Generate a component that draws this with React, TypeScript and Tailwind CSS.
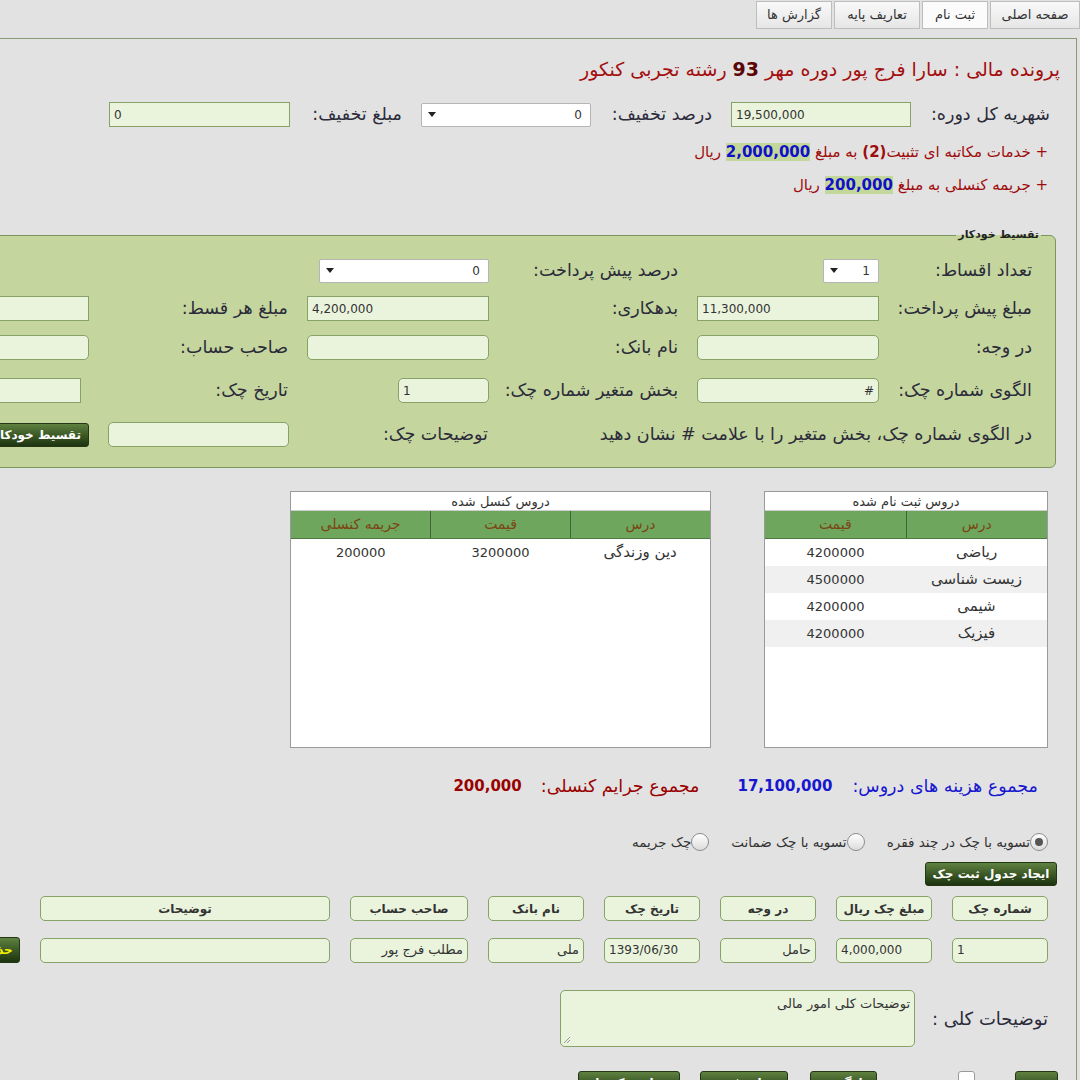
import React from 'react'

const FONT = "font-['DejaVu_Sans','Noto_Sans',sans-serif]"

function Field({ className = '', children }: { className?: string; children?: React.ReactNode }) {
  return (
    <div
      className={`h-[25px] shrink-0 border border-[#86a266] bg-[#eaf4dd] px-[4px] flex items-center text-[12px] text-[#333] whitespace-nowrap overflow-hidden ${className}`}
    >
      {children}
    </div>
  )
}

function Select({ className = '', value }: { className?: string; value: string }) {
  return (
    <div
      className={`h-[24px] shrink-0 border border-[#b5b5b5] bg-white rounded-[2px] flex items-center justify-between pr-[8px] pl-[6px] text-[12px] text-[#333] ${className}`}
    >
      <span>{value}</span>
      <svg width="8" height="5" viewBox="0 0 8 5">
        <path d="M0 0 L8 0 L4 5 Z" fill="#222" />
      </svg>
    </div>
  )
}

function GreenButton({ className = '', children }: { className?: string; children?: React.ReactNode }) {
  return (
    <div
      className={`h-[24px] shrink-0 rounded-[3px] border border-[#233616] bg-gradient-to-b from-[#5f8240] to-[#1d3410] flex items-center justify-center text-[12px] font-bold text-white whitespace-nowrap ${className}`}
    >
      {children}
    </div>
  )
}

function Radio({ checked = false, label }: { checked?: boolean; label: string }) {
  return (
    <div className="flex items-center">
      <div className="w-[18px] h-[18px] rounded-full border border-[#8d8d8d] bg-gradient-to-b from-white to-[#dcdcdc] flex items-center justify-center">
        {checked && <div className="w-[8px] h-[8px] rounded-full bg-[#555]" />}
      </div>
      <span className="text-[13.5px] text-[#333]">{label}</span>
    </div>
  )
}

const regCourses = [
  ['ریاضی', '4200000'],
  ['زیست شناسی', '4500000'],
  ['شیمی', '4200000'],
  ['فیزیک', '4200000'],
]

function CourseTable({
  title,
  cols,
  rows,
  className = '',
}: {
  title: string
  cols: string[]
  rows: string[][]
  className?: string
}) {
  return (
    <div className={`h-[257px] shrink-0 border border-[#9a9a9a] bg-white flex flex-col ${className}`}>
      <div className="h-[19px] text-center text-[13px] leading-[19px] text-[#333] border-b border-[#cfcfcf]">{title}</div>
      <div className="flex h-[28px] bg-[#6ea65e] border-b border-[#4d7a40]">
        {cols.map((c, i) => (
          <div
            key={c}
            className={`flex-1 flex items-center justify-center text-[14px] text-[#7b4513] ${
              i > 0 ? 'border-r border-[#3f6634]' : ''
            }`}
          >
            {c}
          </div>
        ))}
      </div>
      {rows.map((r, ri) => (
        <div key={ri} className={`flex h-[27px] ${ri % 2 === 1 ? 'bg-[#f0f0f0]' : 'bg-white'}`}>
          {r.map((v, i) => (
            <div
              key={i}
              className={`flex-1 flex items-center justify-center text-[#333] ${
                /^\d+$/.test(v) ? 'text-[13px]' : 'text-[15px]'
              }`}
            >
              {v}
            </div>
          ))}
        </div>
      ))}
    </div>
  )
}

const headCells = [
  ['شماره چک', 'w-[96px]'],
  ['مبلغ چک ریال', 'w-[96px]'],
  ['در وجه', 'w-[96px]'],
  ['تاریخ چک', 'w-[96px]'],
  ['نام بانک', 'w-[96px]'],
  ['صاحب حساب', 'w-[118px]'],
  ['توضیحات', 'w-[290px]'],
]

const dataCells: [string, string, boolean][] = [
  ['1', 'w-[96px]', true],
  ['4,000,000', 'w-[96px]', true],
  ['حامل', 'w-[96px]', false],
  ['1393/06/30', 'w-[96px]', true],
  ['ملی', 'w-[96px]', false],
  ['مطلب فرج پور', 'w-[118px]', false],
  ['', 'w-[290px]', false],
]

export default function App() {
  const label = 'text-[17.5px] text-[#2b2b3a] whitespace-nowrap'
  return (
    <div dir="rtl" className={`w-[1080px] h-[1080px] overflow-hidden bg-[#e2e2e2] ${FONT}`}>
      {/* Tabs */}
      <div className="flex gap-[2px] pt-[1px] h-[30px]">
        {[
          ['صفحه اصلی', 'w-[90px]', false],
          ['ثبت نام', 'w-[66px]', true],
          ['تعاریف پایه', 'w-[86px]', false],
          ['گزارش ها', 'w-[76px]', false],
        ].map(([t, w, active]) => (
          <div
            key={t as string}
            className={`${w} h-[28px] border border-[#bdbdbd] flex items-center justify-center text-[13px] text-[#333] ${
              active ? 'bg-[#fbfbfb]' : 'bg-gradient-to-b from-[#f9f9f9] to-[#e6e6e6]'
            }`}
          >
            {t}
          </div>
        ))}
      </div>

      {/* Main panel */}
      <div className="mt-[8px] mr-[3px] w-[1180px] border-t border-r border-[#8a9a76] pr-[16px] pb-[40px]">
        <div className="pt-[18px] leading-[24px] text-[19px] text-[#a30f0f] whitespace-nowrap">
          پرونده مالی : سارا فرج پور دوره مهر <b className="text-[#5c0505]">93</b> رشته تجربی کنکور
        </div>

        {/* Row 1 */}
        <div className="mt-[21px] pr-[10px] flex items-center h-[25px]">
          <div className={`w-[139px] shrink-0 ${label}`}>شهریه کل دوره:</div>
          <Field className="w-[180px] justify-end">19,500,000</Field>
          <div className={`w-[140px] shrink-0 pr-[19px] ${label}`}>درصد تخفیف:</div>
          <Select className="w-[170px]" value="0" />
          <div className={`w-[131px] shrink-0 pr-[19px] ${label}`}>مبلغ تخفیف:</div>
          <Field className="w-[181px] justify-end">0</Field>
        </div>

        <div className="mt-[13px] pr-[12px] leading-[24px] text-[15px] text-[#9e0d0d] whitespace-nowrap">
          + خدمات مکاتبه ای تثبیت<b>(2)</b> به مبلغ{' '}
          <b className="text-[#1010c8] bg-[#c3d79b]">2,000,000</b> ریال
        </div>
        <div className="mt-[9px] pr-[12px] leading-[24px] text-[15px] text-[#9e0d0d] whitespace-nowrap">
          + جریمه کنسلی به مبلغ <b className="text-[#1010c8] bg-[#c3d79b]">200,000</b> ریال
        </div>

        {/* Auto installment fieldset */}
        <div className="relative mt-[38px] ml-[4px] mr-[4px] w-[1250px] h-[233px] border border-[#7d955f] rounded-[6px] bg-[#c4d59e] pt-[22px]">
          <span className="absolute -top-[9px] right-[14px] px-[2px] text-[11px] font-bold leading-[16px] text-[#222] bg-[linear-gradient(to_bottom,#e2e2e2_50%,#c4d59e_50%)]">
            تقسیط خودکار
          </span>

          <div className="flex items-center h-[25px]">
            <div className={`w-[176px] shrink-0 pr-[23px] ${label}`}>تعداد اقساط:</div>
            <div className="w-[182px] shrink-0 flex">
              <Select className="w-[56px]" value="1" />
            </div>
            <div className={`w-[208px] shrink-0 pr-[19px] ${label}`}>درصد پیش پرداخت:</div>
            <div className="w-[182px] shrink-0 flex">
              <Select className="w-[170px]" value="0" />
            </div>
          </div>

          <div className="mt-[13px] flex items-center h-[25px]">
            <div className={`w-[176px] shrink-0 pr-[23px] ${label}`}>مبلغ پیش پرداخت:</div>
            <Field className="w-[182px] justify-end">11,300,000</Field>
            <div className={`w-[208px] shrink-0 pr-[19px] ${label}`}>بدهکاری:</div>
            <Field className="w-[182px] justify-end">4,200,000</Field>
            <div className={`w-[218px] shrink-0 pr-[19px] ${label}`}>مبلغ هر قسط:</div>
            <Field className="w-[182px]" />
          </div>

          <div className="mt-[14px] flex items-center h-[25px]">
            <div className={`w-[176px] shrink-0 pr-[23px] ${label}`}>در وجه:</div>
            <Field className="w-[182px] rounded-[5px]" />
            <div className={`w-[208px] shrink-0 pr-[19px] ${label}`}>نام بانک:</div>
            <Field className="w-[182px] rounded-[5px]" />
            <div className={`w-[218px] shrink-0 pr-[19px] ${label}`}>صاحب حساب:</div>
            <Field className="w-[182px] rounded-[5px]" />
          </div>

          <div className="mt-[18px] flex items-center h-[25px]">
            <div className={`w-[176px] shrink-0 pr-[23px] ${label}`}>الگوی شماره چک:</div>
            <Field className="w-[182px] rounded-[5px]">#</Field>
            <div className={`w-[208px] shrink-0 pr-[19px] ${label}`}>بخش متغیر شماره چک:</div>
            <div className="w-[182px] shrink-0 flex">
              <Field className="w-[91px] rounded-[5px] justify-end">1</Field>
            </div>
            <div className={`w-[218px] shrink-0 pr-[19px] ${label}`}>تاریخ چک:</div>
            <Field className="w-[182px] mr-[8px] justify-end">1393/10/17</Field>
          </div>

          <div className="mt-[19px] flex items-center h-[25px]">
            <div className={`w-[566px] shrink-0 pr-[23px] ${label}`}>
              در الگوی شماره چک، بخش متغیر را با علامت # نشان دهید
            </div>
            <div className={`w-[182px] shrink-0 pr-[1px] ${label}`}>توضیحات چک:</div>
            <div className="w-[218px] shrink-0 pr-[18px] flex">
              <Field className="w-[181px] rounded-[5px]" />
            </div>
            <GreenButton className="w-[104px]">تقسیط خودکار</GreenButton>
          </div>
        </div>

        {/* Course tables */}
        <div className="mt-[23px] pr-[12px] flex gap-[53px]">
          <CourseTable title="دروس ثبت نام شده" cols={['درس', 'قیمت']} rows={regCourses} className="w-[284px]" />
          <CourseTable
            title="دروس کنسل شده"
            cols={['درس', 'قیمت', 'جریمه کنسلی']}
            rows={[['دین وزندگی', '3200000', '200000']]}
            className="w-[421px]"
          />
        </div>

        {/* Totals */}
        <div className="mt-[26px] pr-[22px] flex items-center h-[24px] whitespace-nowrap">
          <span className="text-[17.5px] text-[#1717d0]">مجموع هزینه های دروس:</span>
          <b className="mr-[20px] text-[15px] text-[#1717d0]">17,100,000</b>
          <span className="mr-[38px] text-[17.5px] text-[#990000]">مجموع جرایم کنسلی:</span>
          <b className="mr-[19px] text-[15px] text-[#990000]">200,000</b>
        </div>

        {/* Radios */}
        <div className="mt-[34px] pr-[12px] flex items-center gap-[22px] h-[20px]">
          <Radio checked label="تسویه با چک در چند فقره" />
          <Radio label="تسویه با چک ضمانت" />
          <Radio label="چک جریمه" />
        </div>

        <div className="mt-[10px] pr-[3px] flex">
          <GreenButton className="w-[132px]">ایجاد جدول ثبت چک</GreenButton>
        </div>

        {/* Check grid header */}
        <div className="mt-[10px] pr-[12px] flex gap-[20px]">
          {headCells.map(([t, w]) => (
            <Field key={t} className={`${w} rounded-[5px] justify-center font-bold`}>
              {t}
            </Field>
          ))}
        </div>

        {/* Check grid row */}
        <div className="mt-[16px] pr-[12px] flex items-center gap-[20px]">
          {dataCells.map(([t, w, ltr], i) => (
            <Field key={i} className={`${w} rounded-[5px] ${ltr ? 'justify-end' : 'text-[13px]'}`}>
              {t}
            </Field>
          ))}
          <div className="h-[26px] w-[44px] shrink-0 rounded-[3px] border border-[#233616] bg-gradient-to-b from-[#5f8240] to-[#1d3410] flex items-center justify-center text-[12px] font-bold text-[#f4f000]">
            حذف
          </div>
        </div>

        {/* General notes */}
        <div className="mt-[27px] pr-[12px] flex items-center">
          <div className="w-[133px] shrink-0 text-[18px] text-[#2b2b3a]">توضیحات کلی :</div>
          <div className="relative w-[355px] h-[57px] shrink-0 rounded-[5px] border border-[#86a266] bg-[#eaf4dd] px-[4px] pt-[3px] text-[13px] text-[#333]">
            توضیحات کلی امور مالی
            <svg className="absolute left-[2px] bottom-[2px]" width="8" height="8" viewBox="0 0 8 8">
              <path d="M1 7 L7 1 M4 7 L7 4" stroke="#999" strokeWidth="1" />
            </svg>
          </div>
        </div>

        {/* Bottom actions */}
        <div className="mt-[24px] pr-[2px] flex items-start">
          <GreenButton className="w-[43px]">ثبت</GreenButton>
          <div className="mr-[40px] w-[17px] h-[17px] shrink-0 rounded-[3px] border border-[#9a9a9a] bg-white" />
          <GreenButton className="mr-[81px] w-[67px]">بازگشت</GreenButton>
          <GreenButton className="mr-[22px] w-[88px]">چاپ فرم</GreenButton>
          <GreenButton className="mr-[20px] w-[102px]">چاپ چک ها</GreenButton>
        </div>
      </div>
    </div>
  )
}
